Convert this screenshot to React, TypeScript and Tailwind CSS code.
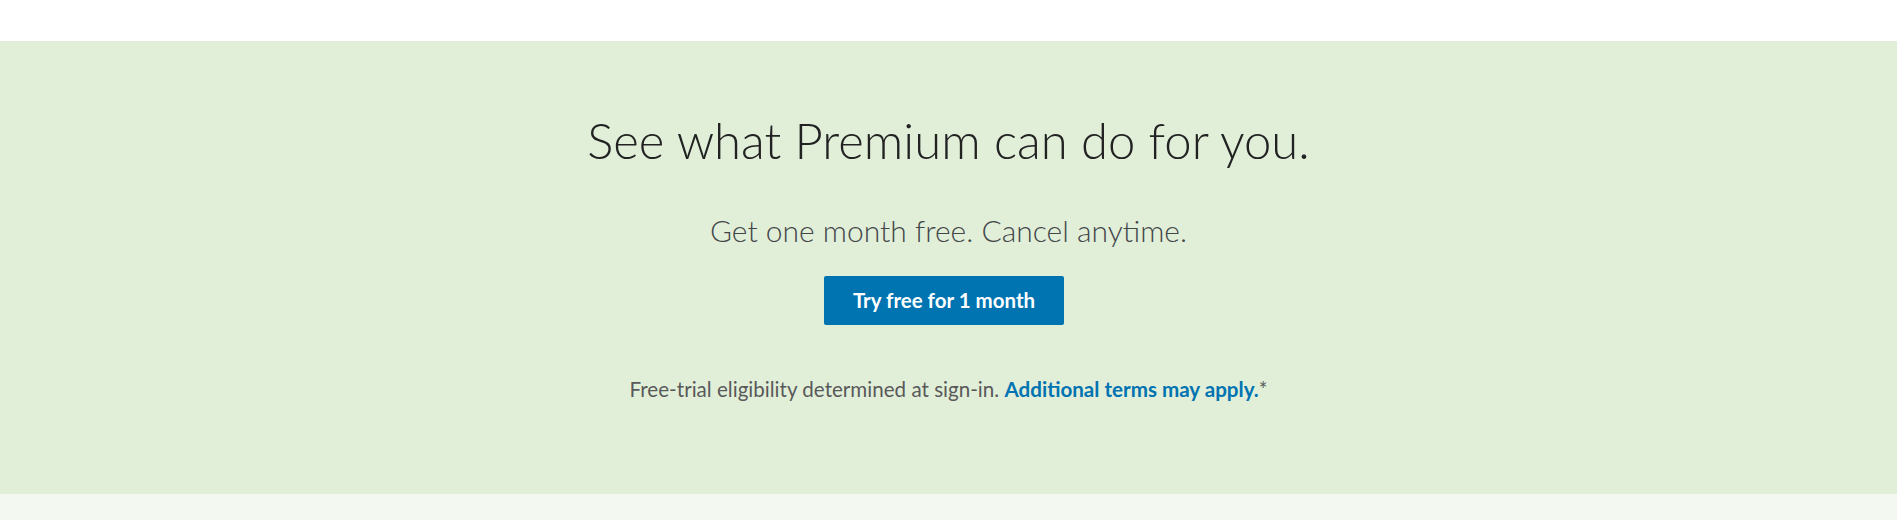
import React from 'react';

const App = () => {
  return (
    <div className="min-h-[520px] bg-white font-['Lato',sans-serif]">
      <div className="h-[41px] bg-white" />
      <section className="flex flex-col items-center bg-[#e1efd9] pb-[93px] pt-[69px]">
        <h1 className="text-[49px] font-light leading-[60px] text-[#222]">
          See what Premium can do for you.
        </h1>
        <p className="mt-[42px] text-[30px] font-light leading-[36px] text-[#434649]">
          Get one month free. Cancel anytime.
        </p>
        <button className="mr-[9px] mt-[28px] flex h-[49px] w-[240px] items-center justify-center rounded-[2px] bg-[#0073b1] text-[20.5px] font-bold text-white">
          Try free for 1 month
        </button>
        <p className="mt-[52px] text-[20.6px] leading-[24px] text-[#595959]">
          Free-trial eligibility determined at sign-in.{' '}
          <a href="#" className="font-bold text-[#0073b1]">
            Additional terms may apply.
          </a>
          *
        </p>
      </section>
      <div className="h-[26px] bg-[#f3f9f1]" />
    </div>
  );
};

export default App;
